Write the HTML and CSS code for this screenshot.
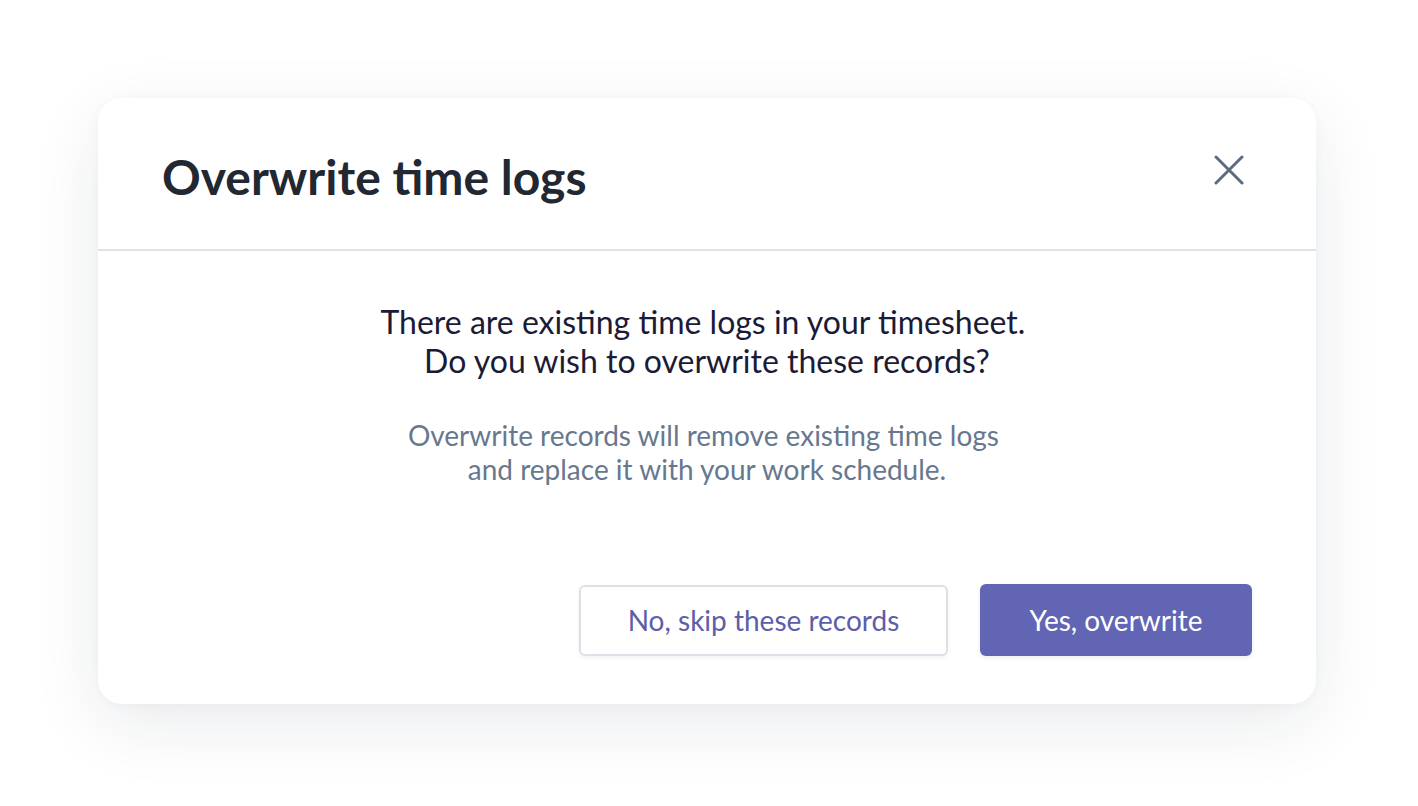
FILE: index.html
```html
<!DOCTYPE html>
<html lang="en">
<head>
<meta charset="utf-8">
<title>Overwrite time logs</title>
<link rel="stylesheet" href="styles.css">
</head>
<body>
<div class="page">
  <div class="dialog" role="dialog">
    <div class="dialog-header">
      <h1 class="dialog-title">Overwrite time logs</h1>
      <button class="close-btn" aria-label="Close">
        <svg width="30" height="30" viewBox="0 0 30 30"><path d="M2 2L28 28M28 2L2 28" stroke="#5b6b80" stroke-width="3" stroke-linecap="round" fill="none"/></svg>
      </button>
    </div>
    <div class="dialog-body">
      <p class="lead">There are existing time logs in your timesheet.&nbsp;<br>Do you wish to overwrite these records?</p>
      <p class="note">Overwrite records will remove existing time logs&nbsp;<br>and replace it with your work schedule.</p>
    </div>
    <div class="dialog-footer">
      <button class="btn btn-secondary">No, skip these records</button>
      <button class="btn btn-primary">Yes, overwrite</button>
    </div>
  </div>
</div>
</body>
</html>
```

FILE: styles.css
```css
html, body {
  margin: 0;
  padding: 0;
  background: #ffffff;
  font-family: Lato, "Noto Sans", sans-serif;
}
.page {
  width: 1418px;
  height: 806px;
  padding: 98px 0 0 98px;
  box-sizing: border-box;
}
.dialog {
  width: 1218px;
  height: 606px;
  background: #ffffff;
  border-radius: 24px;
  box-shadow: 0 20px 70px rgba(20, 30, 50, 0.09), 0 2px 12px rgba(20, 30, 50, 0.03);
  display: flex;
  flex-direction: column;
}
.dialog-header {
  height: 151px;
  border-bottom: 2px solid #dfe3e8;
  display: flex;
  align-items: center;
  justify-content: space-between;
  padding: 0 72px 0 64px;
  flex-shrink: 0;
}
.dialog-title {
  margin: 0;
  font-size: 48px;
  line-height: 57.6px;
  font-weight: 700;
  color: #222831;
  position: relative;
  top: 3px;
}
.close-btn {
  border: 0;
  background: none;
  padding: 0;
  width: 30px;
  height: 30px;
  display: flex;
  cursor: pointer;
  position: relative;
  top: -4px;
}
.dialog-body {
  text-align: center;
  padding-top: 51px;
}
.lead {
  margin: 0;
  font-size: 32px;
  line-height: 39px;
  color: #1c1b36;
}
.note {
  margin: 38px 0 0;
  font-size: 28px;
  line-height: 34px;
  color: #67788e;
}
.dialog-footer {
  display: flex;
  justify-content: flex-end;
  align-items: center;
  gap: 32px;
  padding: 0 64px;
  margin-top: 98px;
}
.btn {
  font-family: Lato, "Noto Sans", sans-serif;
  font-size: 28px;
  border-radius: 6px;
  cursor: pointer;
}
.btn-secondary {
  width: 369px;
  height: 71px;
  background: #ffffff;
  color: #5d5ea8;
  border: 2px solid #dde0e6;
  box-shadow: 0 2px 4px rgba(20, 30, 50, 0.06);
}
.btn-primary {
  width: 272px;
  height: 72px;
  background: #6264b4;
  color: #ffffff;
  border: 0;
  box-shadow: 0 2px 4px rgba(20, 30, 50, 0.08);
}
```
